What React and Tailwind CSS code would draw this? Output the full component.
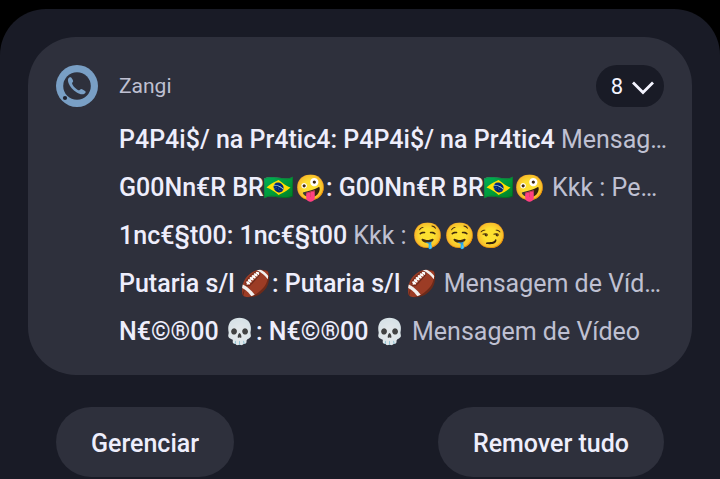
const messages = [
  {
    id: 1,
    title: "P4P4i$/ na Pr4tic4: P4P4i$/ na Pr4tic4",
    text: "Mensag…",
  },
  {
    id: 2,
    title: "G00Nn€R BR🇧🇷🤪: G00Nn€R BR🇧🇷🤪",
    text: "Kkk : Pe…",
  },
  { id: 3, title: "1nc€§t00: 1nc€§t00", text: "Kkk : 🤤🤤😏" },
  {
    id: 4,
    title: "Putaria s/l 🏈: Putaria s/l 🏈",
    text: "Mensagem de Víd…",
  },
  { id: 5, title: "N€©®00 💀: N€©®00 💀", text: "Mensagem de Vídeo" },
];

const ZangiIcon = () => (
  <svg viewBox="0 0 42 42" className="h-[42px] w-[42px] shrink-0" aria-hidden="true">
    <circle cx="21" cy="21" r="21" fill="#799fc5" />
    <circle cx="21" cy="21" r="13.8" fill="#2e303c" />
    <circle cx="9" cy="33" r="2.1" fill="#20232f" />
    <path
      d="M12.3 13.6c.8-1.300 2.200-1.800 3.100-.9l1 1.500c.9 1.500 1 2.300.2 3.100-.7.7-.6 1.300-.1 2.300 1.200 2.300 3 4.100 5.300 5.300.9.500 1.500.4 2.200-.2.800-.8 1.700-.8 3 0l2 1.200c1 .7.9 1.700-.2 2.500-2.100 1.600-4.900 1.100-8-.9-4-2.500-6.900-5.900-8.200-9.300-.7-1.800-.9-3.400-.3-4.600z"
      fill="#799fc5"
    />
  </svg>
);

const MessageRow = ({ title, text }) => (
  <li className="whitespace-nowrap text-[25px] leading-[48px] text-[#bfc0d2]">
    <span className="font-medium text-[#eeeefc]">{title}</span> {text}
  </li>
);

const ActionButton = ({ children }) => (
  <button
    type="button"
    className="h-[70px] rounded-full bg-[#2e303c] px-[35px] pt-1 text-[25px] font-medium text-[#eeeefc]"
  >
    {children}
  </button>
);

const App = () => {
  return (
    <div className="min-h-screen bg-black pt-[9px] font-['Roboto','Noto_Color_Emoji',sans-serif]">
      <main className="min-h-[470px] rounded-t-[46px] bg-[#191b26] px-7 pt-7">
        <section className="rounded-[48px] bg-[#2e303c] px-7 pt-7 pb-[19px]">
          <header className="flex items-center">
            <ZangiIcon />
            <h1 className="ml-[21px] pt-px text-[21px] text-[#bfc0d2]">Zangi</h1>
            <button
              type="button"
              aria-label="8 notificações, expandir"
              className="ml-auto flex h-[42px] w-[68px] items-center justify-end gap-[9px] rounded-full bg-[#191b26] pr-[10px] text-[22px] text-[#f4f4ff]"
            >
              8
              <svg viewBox="0 0 22 14" className="mt-[3px] h-[14px] w-[22px]" fill="none" aria-hidden="true">
                <path d="M1 1.500l10 10L21 1.500" stroke="currentColor" strokeWidth="2.800" />
              </svg>
            </button>
          </header>
          <ul className="mt-[9px] pl-[63px]">
            {messages.map((message) => (
              <MessageRow key={message.id} title={message.title} text={message.text} />
            ))}
          </ul>
        </section>

        <footer className="mt-8 flex justify-between px-7">
          <ActionButton>Gerenciar</ActionButton>
          <ActionButton>Remover tudo</ActionButton>
        </footer>
      </main>
    </div>
  );
};

export default App;
